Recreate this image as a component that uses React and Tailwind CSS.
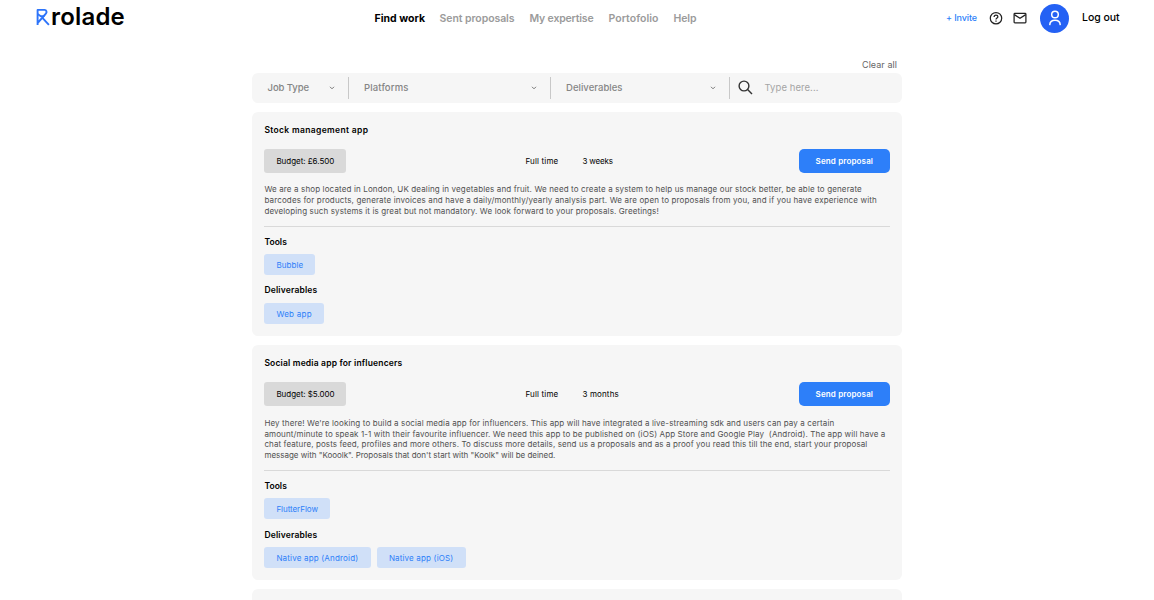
const navLinks = [
  { title: "Find work", style: "font-bold text-black tracking-[0.01px] w-[65px]" },
  { title: "Sent proposals", style: "font-semibold text-[#9b9b9b] tracking-[-0.069px] w-[90px]" },
  { title: "My expertise", style: "font-semibold text-[#9b9b9b] tracking-[-0.176px] w-[79px]" },
  { title: "Portofolio", style: "font-semibold text-[#9b9b9b] tracking-[0.044px] w-[65px]" },
  { title: "Help", style: "font-semibold text-[#9b9b9b] tracking-[-0.086px]" },
];

const filters = [
  { title: "Job Type", style: "w-[97px] pl-[15.5px] pr-[13px]", text: "tracking-[-0.08px]" },
  { title: "Platforms", style: "w-[202px] pl-[15px] pr-[13px]", text: "tracking-[0.132px]" },
  { title: "Deliverables", style: "w-[179px] pl-[15px] pr-[13px]", text: "tracking-[0.035px]" },
];

const jobs = [
  {
    title: "Stock management app",
    titleStyle: "tracking-[0.348px]",
    budget: "Budget: £6.500",
    type: "Full time",
    duration: "3 weeks",
    durationStyle: "tracking-[-0.15px]",
    description: [
      {
        text: "We are a shop located in London, UK dealing in vegetables and fruit. We need to create a system to help us manage our stock better, be able to generate",
        style: "tracking-[0.135px]",
      },
      {
        text: "barcodes for products, generate invoices and have a daily/monthly/yearly analysis part. We are open to proposals from you, and if you have experience with",
        style: "tracking-[0.147px]",
      },
      {
        text: "developing such systems it is great but not mandatory. We look forward to your proposals. Greetings!",
        style: "tracking-[0.122px]",
      },
    ],
    tools: [{ name: "Bubble", style: "w-[51px] tracking-[0.104px]" }],
    deliverables: [{ name: "Web app", style: "w-[60px] tracking-[0.275px]" }],
  },
  {
    title: "Social media app for influencers",
    titleStyle: "tracking-[0.182px]",
    budget: "Budget: $5.000",
    type: "Full time",
    duration: "3 months",
    durationStyle: "tracking-[0.15px]",
    description: [
      {
        text: "Hey there! We're looking to build a social media app for influencers. This app will have integrated a live-streaming sdk and users can pay a certain",
        style: "tracking-[0.124px]",
      },
      {
        text: "amount/minute to speak 1-1 with their favourite influencer. We need this app to be published on (iOS) App Store and Google Play  (Android). The app will have a",
        style: "tracking-[0.124px]",
      },
      {
        text: "chat feature, posts feed, profiles and more others. To discuss more details, send us a proposals and as a proof you read this till the end, start your proposal",
        style: "tracking-[0.105px]",
      },
      {
        text: 'message with "Kooolk". Proposals that don\'t start with "Koolk" will be deined.',
        style: "tracking-[-0.017px]",
      },
    ],
    tools: [{ name: "FlutterFlow", style: "w-[66px] tracking-[-0.047px]" }],
    deliverables: [
      { name: "Native app (Android)", style: "w-[106.5px] tracking-[0.182px]" },
      { name: "Native app (iOS)", style: "w-[89px] tracking-[0.163px]" },
    ],
  },
];

function Logo() {
  return (
    <div className="flex h-9 items-start">
      <svg
        className="mt-2 h-[18px] w-[14px]"
        viewBox="0 0 14 18"
        fill="none"
        stroke="#2d74fa"
        strokeWidth="1.9"
        strokeLinejoin="round"
      >
        <path d="M1.6 17V1.9H8.6C10.6 1.9 11 4.2 10 5.4L8.4 7.4L1.6 15" />
        <path d="M1.6 6L4.8 8.2H7.6L8.6 7.2" />
        <path d="M6.2 9.6L12.9 16.8" />
      </svg>
      <span className="ml-[1px] text-[24px] leading-[34px] font-semibold tracking-[0.193px] text-black">
        rolade
      </span>
    </div>
  );
}

function HelpIcon() {
  return (
    <svg className="size-[14px]" viewBox="0 0 14 14" fill="none" stroke="#222" strokeWidth="1.25">
      <circle cx="7" cy="7.2" r="5.7" />
      <path d="M5.1 5.9C5.1 4.7 5.9 4 7 4S8.9 4.7 8.9 5.7C8.9 6.9 7 7.1 7 8.5" />
      <path d="M7 9.4V10.7" />
    </svg>
  );
}

function MailIcon() {
  return (
    <svg className="size-[14px]" viewBox="0 0 14 14" fill="none" stroke="#222" strokeWidth="1.25">
      <rect x="1.1" y="2.4" width="11.8" height="9.4" rx="0.8" />
      <path d="M1.3 3.6L7 7.2L12.7 3.6" />
    </svg>
  );
}

function UserIcon() {
  return (
    <svg
      className="h-[16px] w-[14px]"
      viewBox="0 0 14 16"
      fill="none"
      stroke="white"
      strokeWidth="1.5"
      strokeLinecap="round"
    >
      <circle cx="7" cy="4.5" r="3.3" />
      <path d="M1.8 14.6C2 11.8 4 10.2 7 10.2S12 11.8 12.2 14.6" />
    </svg>
  );
}

function TagList({ title, titleStyle, tags }) {
  return (
    <>
      <h4 className={`h-3 text-[8.5px] leading-3 font-semibold text-black ${titleStyle}`}>
        {title}
      </h4>
      <div className="mt-[6.5px] flex gap-[6px]">
        {tags.map(({ name, style }) => (
          <span
            key={name}
            className={`h-[21px] rounded-[3px] bg-[#d0e0f8] pl-3 text-[8px] leading-[22px] whitespace-nowrap text-[#2d7ff9] ${style}`}
          >
            {name}
          </span>
        ))}
      </div>
    </>
  );
}

function JobCard({ job }) {
  return (
    <div className="rounded-[6px] bg-[#f6f6f6] px-[12.4px] pt-3 pb-3">
      <h3 className={`h-3 text-[8.5px] leading-3 font-semibold text-black ${job.titleStyle}`}>
        {job.title}
      </h3>

      <div className="mt-[12.6px] flex h-6 items-center text-[8px] text-black">
        <div className="h-6 w-[82px] rounded-[3px] bg-[#d9d9d9] pl-3 leading-6 tracking-[-0.035px]">
          {job.budget}
        </div>
        <span className="ml-[179px] w-[57px] tracking-[0.161px]">{job.type}</span>
        <span className={job.durationStyle}>{job.duration}</span>
        <button className="ml-auto h-6 w-[90.5px] rounded-[5px] bg-[#2d7ff9] text-center font-semibold tracking-[0.142px] text-white">
          Send proposal
        </button>
      </div>

      {/* Description */}
      <div className="mt-[11.9px] text-[8px] leading-[10.8px] text-[#505050]">
        {job.description.map(({ text, style }) => (
          <p key={text} className={`whitespace-pre ${style}`}>
            {text}
          </p>
        ))}
      </div>

      <div className="mt-[8.9px] mb-[9px] h-px bg-[#d9d9d9]" />

      <TagList title="Tools" titleStyle="tracking-[0.059px]" tags={job.tools} />
      <div className="h-[9.2px]" />
      <TagList title="Deliverables" titleStyle="tracking-[0.177px]" tags={job.deliverables} />
    </div>
  );
}

export default function App() {
  return (
    <div className="h-[600px] overflow-hidden bg-white font-['Inter',sans-serif]">
      {/* Header */}
      <header className="flex h-9 items-center pr-[34.5px] pl-9">
        <Logo />
        <nav className="ml-auto flex text-[10.5px] leading-[17px] whitespace-nowrap">
          {navLinks.map(({ title, style }) => (
            <a key={title} href="#" className={style}>
              {title}
            </a>
          ))}
        </nav>
        <div className="ml-[249.5px] flex items-center whitespace-nowrap">
          <a href="#" className="w-[43px] text-[9px] font-medium tracking-[-0.105px] text-[#2d7ff9]">
            + Invite
          </a>
          <HelpIcon />
          <div className="w-[10px]" />
          <MailIcon />
          <div className="ml-[13px] flex size-[29px] items-center justify-center rounded-full bg-[#2461f4]">
            <UserIcon />
          </div>
          <a href="#" className="ml-[13px] text-[10.5px] font-medium tracking-[-0.047px] text-black">
            Log out
          </a>
        </div>
      </header>

      <main className="mx-auto w-[650px] pt-[22px]">
        <div className="h-[15px] pr-[5px] text-right text-[9px] leading-[13px] tracking-[0.057px] text-[#666]">
          Clear all
        </div>

        {/* Filters */}
        <div className="flex h-[29.6px] items-center rounded-[6px] bg-[#f6f6f6] text-[9.5px]">
          {filters.map(({ title, style, text }) => (
            <div
              key={title}
              className={`flex h-[22px] items-center justify-between border-r border-[#c8c8c8] font-medium text-[#858585] ${style}`}
            >
              <span className={`pt-px ${text}`}>{title}</span>
              <svg className="h-[4px] w-[6px]" viewBox="0 0 6 4" fill="none" stroke="#777">
                <path d="M1 0.8L3 2.8L5 0.8" />
              </svg>
            </div>
          ))}
          <svg
            className="ml-[7.5px] h-[15px] w-[15px]"
            viewBox="0 0 15 15"
            fill="none"
            stroke="#333"
            strokeWidth="1.4"
          >
            <circle cx="6" cy="6" r="4.9" />
            <path d="M9.6 9.6L14 14" />
          </svg>
          <span className="ml-3 pt-px tracking-[0.064px] text-[#a5a5a5]">Type here...</span>
        </div>

        {/* Jobs */}
        <div className="mt-[9.4px] flex flex-col gap-[9.4px]">
          {jobs.map((job) => (
            <JobCard key={job.title} job={job} />
          ))}
          <div className="h-[224px] rounded-[6px] bg-[#f6f6f6]" />
        </div>
      </main>
    </div>
  );
}
